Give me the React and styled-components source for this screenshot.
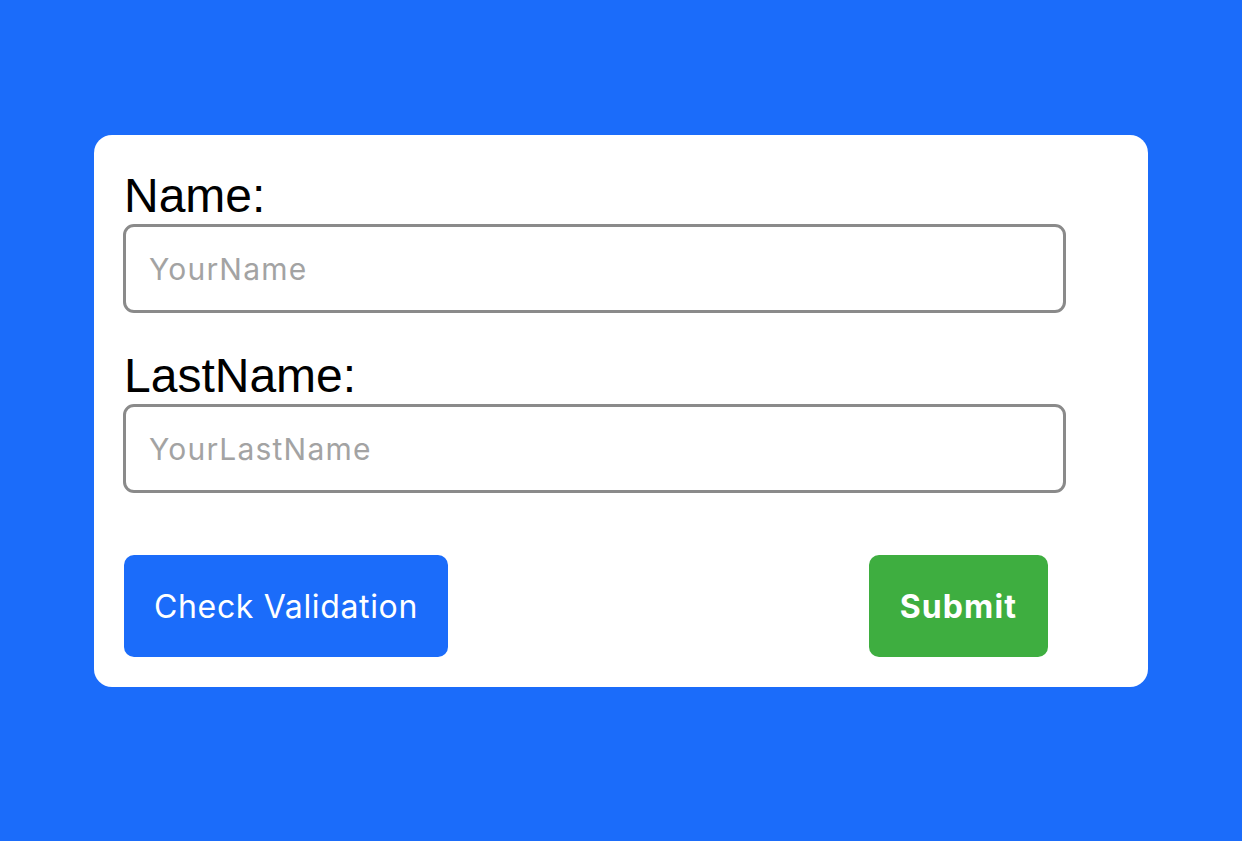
import React from "react"
import styled, { createGlobalStyle } from "styled-components"

const GlobalStyle = createGlobalStyle`
  html, body {
    margin: 0;
    padding: 0;
    background: #1b6cfa;
  }
  body {
    font-family: "Liberation Sans", Arial, sans-serif;
  }
`

const Page = styled.div`
  width: 1242px;
  height: 841px;
  background: #1b6cfa;
  padding: 135px 0 0 94px;
  box-sizing: border-box;
`

const Card = styled.form`
  width: 1054px;
  height: 552px;
  box-sizing: border-box;
  background: white;
  border-radius: 18px;
  padding: 33px 30px 30px;
  display: flex;
  flex-direction: column;
`

const Label = styled.label`
  display: block;
  font-family: "Liberation Sans", Arial, sans-serif;
  font-size: 48px;
  line-height: 56px;
  color: black;
  margin-bottom: 0;
  margin-top: ${(p) => p.$top || 0}px;
`

const Input = styled.input`
  width: 943px;
  height: 89px;
  box-sizing: border-box;
  margin-left: -1px;
  border: 3px solid #8a8a8a;
  border-radius: 11px;
  padding: 0 23px;
  font-family: Inter, "Noto Sans", sans-serif;
  font-size: 30px;
  letter-spacing: 1.2px;
  color: #222;
  outline: none;

  &::placeholder {
    color: #a3a3a3;
  }
`

const ButtonRow = styled.div`
  width: 924px;
  margin-top: auto;
  display: flex;
  justify-content: space-between;
`

const Button = styled.button`
  height: 102px;
  border: none;
  border-radius: 10px;
  padding: 0 ${(p) => (p.$bold ? 31 : 30)}px;
  font-family: Inter, "Noto Sans", sans-serif;
  font-size: 32px;
  font-weight: ${(p) => (p.$bold ? 700 : 400)};
  letter-spacing: ${(p) => (p.$bold ? 1.1 : 0.65)}px;
  color: white;
  background: ${(p) => p.$color};
  cursor: pointer;
`

export default function App() {
  return (
    <>
      <GlobalStyle />
      <Page>
        <Card onSubmit={(e) => e.preventDefault()}>
          <Label htmlFor="name">Name:</Label>
          <Input id="name" placeholder="YourName" />
          <Label htmlFor="lastname" $top={35}>
            LastName:
          </Label>
          <Input id="lastname" placeholder="YourLastName" />
          <ButtonRow>
            <Button type="button" $color="#1b6cfa">
              Check Validation
            </Button>
            <Button type="submit" $color="#3eae40" $bold>
              Submit
            </Button>
          </ButtonRow>
        </Card>
      </Page>
    </>
  )
}
